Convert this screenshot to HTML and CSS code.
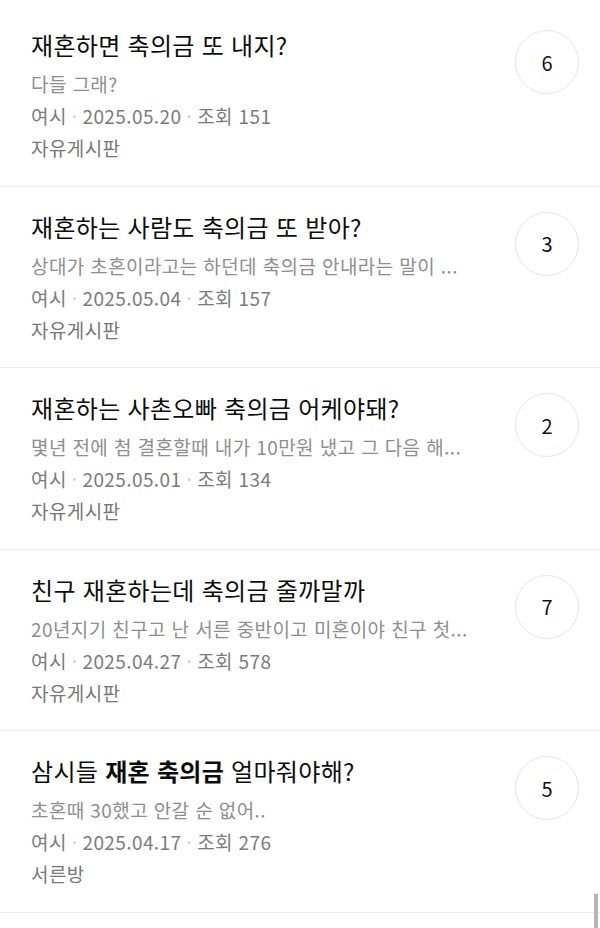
FILE: index.html
```html
<!DOCTYPE html>
<html lang="ko">
<head>
    <meta charset="UTF-8">
    <meta name="viewport" content="width=device-width, initial-scale=1.0">
    <title>검색 결과</title>
    <link rel="stylesheet" href="styles.css">
</head>
<body>
    <ul class="post-list">
        <li class="post">
            <div class="post-body">
                <h3 class="post-title">재혼하면 축의금 또 내지?</h3>
                <p class="post-snippet">다들 그래?</p>
                <p class="post-meta">여시<span class="dot">·</span>2025.05.20<span class="dot">·</span>조회 151</p>
                <p class="post-board">자유게시판</p>
            </div>
            <div class="comment-count">6</div>
        </li>
        <li class="post">
            <div class="post-body">
                <h3 class="post-title">재혼하는 사람도 축의금 또 받아?</h3>
                <p class="post-snippet">상대가 초혼이라고는 하던데 축의금 안내라는 말이 ...</p>
                <p class="post-meta">여시<span class="dot">·</span>2025.05.04<span class="dot">·</span>조회 157</p>
                <p class="post-board">자유게시판</p>
            </div>
            <div class="comment-count">3</div>
        </li>
        <li class="post">
            <div class="post-body">
                <h3 class="post-title">재혼하는 사촌오빠 축의금 어케야돼?</h3>
                <p class="post-snippet">몇년 전에 첨 결혼할때 내가 10만원 냈고 그 다음 해...</p>
                <p class="post-meta">여시<span class="dot">·</span>2025.05.01<span class="dot">·</span>조회 134</p>
                <p class="post-board">자유게시판</p>
            </div>
            <div class="comment-count">2</div>
        </li>
        <li class="post">
            <div class="post-body">
                <h3 class="post-title">친구 재혼하는데 축의금 줄까말까</h3>
                <p class="post-snippet">20년지기 친구고 난 서른 중반이고 미혼이야 친구 첫...</p>
                <p class="post-meta">여시<span class="dot">·</span>2025.04.27<span class="dot">·</span>조회 578</p>
                <p class="post-board">자유게시판</p>
            </div>
            <div class="comment-count">7</div>
        </li>
        <li class="post">
            <div class="post-body">
                <h3 class="post-title">삼시들 <b>재혼 축의금</b> 얼마줘야해?</h3>
                <p class="post-snippet">초혼때 30했고 안갈 순 없어..</p>
                <p class="post-meta">여시<span class="dot">·</span>2025.04.17<span class="dot">·</span>조회 276</p>
                <p class="post-board">서른방</p>
            </div>
            <div class="comment-count">5</div>
        </li>
    </ul>
    <div class="scrollbar"></div>
</body>
</html>
```

FILE: styles.css
```css
body {
    margin: 0;
    background: #fff;
    font-family: "Noto Sans CJK KR", "Noto Sans", sans-serif;
    color: #111;
    overflow: hidden;
}

.post-list {
    list-style: none;
    margin: 0;
    padding: 5px 0 0;
}

.post {
    display: flex;
    align-items: flex-start;
    height: 180.5px;
    padding: 0 21px 0 31px;
    border-bottom: 1px solid #ebebeb;
}

.post-body {
    flex: 1;
    padding-top: 23px;
}

.post-title {
    margin: 0;
    font-size: 24px;
    line-height: 34px;
    font-weight: 400;
    letter-spacing: 0.3px;
    color: #0c0c0c;
}

.post-title b {
    font-weight: 700;
}

.post-snippet,
.post-meta,
.post-board {
    margin: 0;
    font-size: 19px;
    line-height: 32px;
    letter-spacing: 0.4px;
}

.post-snippet {
    margin-top: 6px;
    color: #8e8e8e;
}

.post-meta {
    color: #7b7b7b;
}

.post-board {
    color: #777;
}

.dot {
    color: #d0d0d0;
    margin: 0 5px;
}

.comment-count {
    width: 62px;
    height: 62px;
    margin-top: 25px;
    border: 1px solid #e6e6e6;
    border-radius: 50%;
    display: flex;
    align-items: center;
    justify-content: center;
    font-size: 20px;
    color: #111;
    flex-shrink: 0;
}

.scrollbar {
    position: fixed;
    right: 2px;
    bottom: 0;
    width: 4px;
    height: 34px;
    background: #b5b5b5;
}
```
